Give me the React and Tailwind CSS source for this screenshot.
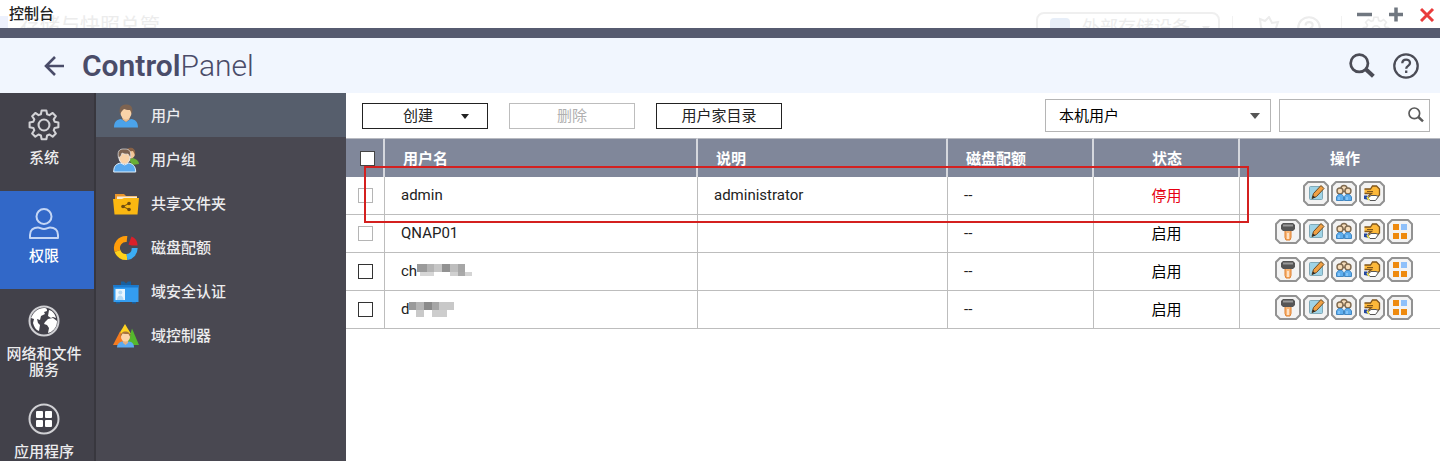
import { clsx } from 'clsx'

const navItems = [
  { label: '系统', icon: SystemIcon },
  { label: '权限', icon: PrivilegeIcon, active: true },
  { label: '网络和文件服务', icon: GlobeIcon },
  { label: '应用程序', icon: AppsIcon },
]

const subItems = [
  { label: '用户', icon: UserIcon, active: true },
  { label: '用户组', icon: GroupIcon },
  { label: '共享文件夹', icon: FolderIcon },
  { label: '磁盘配额', icon: QuotaIcon },
  { label: '域安全认证', icon: BadgeIcon },
  { label: '域控制器', icon: DomainIcon },
]

const allActions = ['password', 'edit', 'groups', 'share', 'apps']

// mask: [x, y, width, height, colour] blocks that hide the rest of the name
const users = [
  { name: 'admin', description: 'administrator', enabled: false, locked: true, actions: ['edit', 'groups', 'share'] },
  { name: 'QNAP01', enabled: true, locked: true, actions: allActions },
  {
    name: 'ch',
    enabled: true,
    actions: allActions,
    mask: [
      [0, 0, 10, 8, '#9a9a9a'], [10, 0, 7, 8, '#b4b4b4'], [17, 0, 8, 8, '#c6c6c6'], [25, 0, 8, 8, '#929292'],
      [33, 0, 8, 8, '#bdbdbd'], [41, 0, 7, 8, '#a6a6a6'], [3, 8, 14, 4, '#d6d6d6'], [33, 8, 8, 4, '#d0d0d0'],
      [41, 8, 7, 4, '#a9a9a9'], [48, 8, 7, 4, '#d4d4d4'],
    ],
  },
  {
    name: 'd',
    enabled: true,
    actions: allActions,
    mask: [
      [0, 0, 7, 8, '#9a9a9a'], [7, 0, 8, 8, '#b4b4b4'], [15, 0, 8, 8, '#8a8a8a'], [23, 0, 7, 8, '#a6a6a6'],
      [30, 0, 15, 8, '#c8c8c8'], [7, 8, 8, 7, '#c9c9c9'], [23, 8, 15, 7, '#cdcdcd'],
    ],
  },
]

const actionLabels = {
  password: '更改密码',
  edit: '编辑帐号配置',
  groups: '编辑用户组',
  share: '编辑共享文件夹权限',
  apps: '编辑应用程序权限',
}

// Rounded gear with eight teeth
const GEAR =
  'M13.500 1.500h5l.8 4 2.500 1 3.400-2.300 3.400 3.400-2.300 3.400 1 2.500 4 .8v5l-4 .8-1 2.500 2.300 3.400-3.400 3.400-3.400-2.300-2.500 1-.8 4h-5l-.8-4-2.500-1-3.400 2.300-3.400-3.400 2.300-3.400-1-2.500-4-.8v-5l4-.8 1-2.500-2.300-3.400 3.400-3.400 3.400 2.300 2.500-1z'

function SystemIcon() {
  return (
    <svg viewBox="0 0 32 34" className="size-8" fill="none" stroke="#d2d2d6" strokeWidth="2.200" strokeLinejoin="round">
      <path d={GEAR} />
      <circle cx="16" cy="17" r="5.800" />
    </svg>
  )
}

function PrivilegeIcon() {
  return (
    <svg viewBox="0 0 32 32" className="size-8" fill="none" stroke="#c4d6f5" strokeWidth="2" strokeLinejoin="round">
      <circle cx="16" cy="9.500" r="7.500" />
      <path d="M2 31v-3c0-5 3.500-7.500 8-7.500 2 0 3 1.500 6 1.500s4-1.500 6-1.500c4.500 0 8 2.500 8 7.500v3z" />
    </svg>
  )
}

function GlobeIcon() {
  return (
    <svg viewBox="0 0 32 32" className="size-8" fill="#fff">
      <circle cx="16" cy="16" r="14.500" fill="none" stroke="#d0d0d4" strokeWidth="2" />
      <path d="M4 11c2-4 6-8 12-8 3 0 3 1 3 3l-3 1 1 2-4 2-1 4-3-1 1 4 2 2-1 6c-3-1-5-4-6-8l1-4-3-1z" />
      <path d="M21 5c4 1 6 4 7 8l-3-1-2 1-3-2zM17 17l3-3 5-1 4 3c0 5-2 8-6 11l-3 1 1-5-2-3-3-1z" />
    </svg>
  )
}

function AppsIcon() {
  return (
    <svg viewBox="0 0 32 32" className="size-8" fill="#fff">
      <circle cx="16" cy="16" r="14.500" fill="none" stroke="#d0d0d4" strokeWidth="2" />
      <rect x="8" y="8" width="7" height="7" rx="1" />
      <rect x="17" y="8" width="7" height="7" rx="1" />
      <rect x="8" y="17" width="7" height="7" rx="1" />
      <rect x="17" y="17" width="7" height="7" rx="1" />
    </svg>
  )
}

function UserIcon() {
  return (
    <svg viewBox="0 0 26 26" className="size-[26px]">
      <path d="M1 24.500c0-6 3-8 7-8.500l5 3 5-3c4 .5 7 2.500 7 8.500z" fill="#4ba3ea" />
      <path d="M9.500 13h7v3.500L13 19l-3.500-2.500z" fill="#e9b98a" />
      <ellipse cx="13" cy="10" rx="5.500" ry="6.500" fill="#fad3a8" />
      <path d="M7 11C5 2 11 1.500 13 1.500c3 0 8 1 6 9.500L17 7c-3 0-5-.500-6-1L9 8z" fill="#7d6350" />
    </svg>
  )
}

function GroupIcon() {
  return (
    <svg viewBox="0 0 26 26" className="size-[26px]">
      <path d="M16 12l4-1c3 1 6 3 6 6l-7 1z" fill="#69ad35" />
      <ellipse cx="18" cy="6.500" rx="4" ry="5" fill="#f3c697" />
      <path d="M13 5c0-6 11-6 9 3l-2-4z" fill="#876044" />
      <path d="M.7 25c0-7 3-8 7-9l4 2 4-2c4 1 7 3 7 9z" fill="#59a9ee" stroke="#e0effc" />
      <ellipse cx="11.500" cy="10.500" rx="5.500" ry="6.500" fill="#fad3a8" stroke="#eeeeee" />
      <path d="M5.500 11c-2-9.500 3.500-9 6-9S19 2 17.500 11l-2.500-4c-3 .5-5-.5-6-1L8 9z" fill="#7d6350" stroke="#e6e6e6" strokeWidth=".7" />
    </svg>
  )
}

function FolderIcon() {
  return (
    <svg viewBox="0 0 26 26" className="size-[26px]">
      <path d="M2 3h9l2 2h11v8H2z" fill="#e9952a" />
      <path d="M4 5.500h20v6H4z" fill="#f7ead5" />
      <path d="M0 8h9l2-1h15l-1.500 16.500h-23z" fill="#fbb811" />
      <g fill="#704c10">
        <circle cx="10" cy="15.500" r="1.800" />
        <circle cx="16" cy="12.500" r="1.800" />
        <circle cx="16" cy="18.500" r="1.800" />
      </g>
      <path d="M16 12.500l-6 3 6 3" fill="none" stroke="#704c10" />
    </svg>
  )
}

function QuotaIcon() {
  return (
    <svg viewBox="0 0 26 26" className="size-[26px]" fill="none" strokeWidth="6">
      <path d="M4.500 16A9 9 0 0 1 14 4" stroke="#ff9d0a" />
      <path d="M14 22a9 9 0 0 1-9.500-6" stroke="#ffd21a" />
      <path d="M21.700 13A9 9 0 0 1 14 22" stroke="#3badf4" />
      <path d="M15.500 9.500l3-8c4 1.500 6 5 6 9h-6z" fill="#d9202a" stroke="none" />
    </svg>
  )
}

function BadgeIcon() {
  return (
    <svg viewBox="0 0 26 26" className="size-[26px]">
      <path d="M8 6V2.500h3l2 2 2-2h3V6z" fill="#175f9f" />
      <rect x=".5" y="6" width="25" height="17" fill="#349df0" />
      <rect x=".5" y="6" width="25" height="2.500" fill="#1b79cc" />
      <rect x="2.500" y="10" width="9.500" height="11" fill="#e9f6ff" />
      <circle cx="7.300" cy="13.500" r="2" fill="#b4daf5" />
      <path d="M4 21c0-6 6.500-6 6.500 0z" fill="#b4daf5" />
      <path d="M3 23h4v1.500H3zM19 23h4v1.500h-4z" fill="#175f9f" />
    </svg>
  )
}

function DomainIcon() {
  return (
    <svg viewBox="0 0 26 26" className="size-[26px]">
      <path d="M12 1l6 10H6z" fill="#ffd321" />
      <path d="M7 8.500L14 22H0z" fill="#f47b20" />
      <path d="M19 5.500L26 22H14z" fill="#55b82d" />
      <path d="M4 24.500c0-4 3-5.500 5-6h7c3 .5 5 2 5 6z" fill="#5baaf0" />
      <path d="M10 17h5v3l-2.500 2-2.500-2z" fill="#e5b180" />
      <circle cx="12.500" cy="14" r="4.500" fill="#fbd4aa" />
      <path d="M7.500 14c-1-7.500 11-7.500 10 0l-2-3c-2 0-5 0-6-.500z" fill="#a8743f" />
    </svg>
  )
}

const actionGlyphs = {
  password: (
    <>
      <path d="M10 10h6v8.500l-1 2.500h-4l-1-2.500z" fill="#f9b574" stroke="#dd7d2a" />
      <path d="M13 14v6" stroke="#fff0df" strokeWidth="1.500" />
      <path d="M8 4h10l2 2v4l-2 2H8l-2-2V6z" fill="#555" />
      <path d="M8 6.500h10" stroke="#999" strokeWidth="2" />
    </>
  ),
  edit: (
    <>
      <rect x="6.500" y="5.500" width="13" height="13" rx="1" fill="#9fd3e6" stroke="#7fa9b8" />
      <path d="M9 17.500l1.500-5L18 4.500l3 3-7.500 8z" fill="#f0a044" stroke="#6b4a22" />
      <path d="M9 17.500l1-3 2.500 2z" fill="#2b2b2b" />
    </>
  ),
  groups: (
    <>
      <circle cx="13" cy="7.500" r="3" fill="#f6dcb9" stroke="#7f6a50" strokeWidth="1.400" />
      <circle cx="9" cy="10" r="3" fill="#f6dcb9" stroke="#7f6a50" strokeWidth="1.400" />
      <circle cx="17" cy="10" r="3" fill="#f6dcb9" stroke="#7f6a50" strokeWidth="1.400" />
      <path d="M5.500 19.500V16l2-2.500h3.500l1.500 2v4zM13.500 19.500v-4l1.500-2h3.500l2 2.500v3.500z" fill="#5eaeee" stroke="#4287c2" />
      <path d="M8 16v3M16 16v3" stroke="#a8d8ff" />
    </>
  ),
  share: (
    <>
      <path d="M5.500 8h6l2-3h4l3 3v6l-3 3-8-2 3-2.500h-7" fill="#fdb93a" stroke="#80561c" strokeWidth="1.300" />
      <path d="M8 10.500h6" stroke="#80561c" />
      <path d="M9 17l3-2.500h5l2.500 1-3 4H11z" fill="#fff" stroke="#555" />
      <path d="M5 14.500h3l2 4.500-5-1z" fill="#2346a0" />
      <path d="M8 16l2 3" stroke="#f3e34b" strokeWidth="1.500" />
    </>
  ),
  apps: (
    <>
      <rect x="6" y="5" width="6" height="6" fill="#ee8a0e" />
      <rect x="14" y="5" width="6" height="6" fill="#8ec0fa" />
      <rect x="6" y="14" width="6" height="6" fill="#ee8a0e" />
      <rect x="14" y="14" width="6" height="6" fill="#ee8a0e" />
    </>
  ),
}

function ActionButton({ type }) {
  return (
    <button type="button" aria-label={actionLabels[type]} title={actionLabels[type]} className="block">
      <svg viewBox="0 0 26 25" className="h-[25px] w-[26px]" fill="none">
        <path d="M5 1h16l4 4v15l-4 4H5l-4-4V5z" fill="#f3f3f3" stroke="#929292" strokeWidth="2" strokeLinejoin="round" />
        {actionGlyphs[type]}
      </svg>
    </button>
  )
}

function SearchIcon({ className }) {
  return (
    <svg viewBox="0 0 24 24" className={className} fill="none" stroke="currentColor">
      <circle cx="9.500" cy="9.500" r="8" strokeWidth="2.500" />
      <path d="M15.500 15l7 6.500" strokeWidth="3.800" />
    </svg>
  )
}

function HelpIcon({ className }) {
  return (
    <svg viewBox="0 0 26 26" className={className} fill="none" stroke="currentColor" strokeWidth="2.300">
      <circle cx="13" cy="13" r="11.700" />
      <path d="M9.300 10.300c0-5 7.700-4.700 7.700-.3 0 3-3.800 2.700-3.800 5.700M13.200 17.500V20" />
    </svg>
  )
}

function Caret({ className }) {
  return (
    <svg viewBox="0 0 10 6" className={className} fill="currentColor">
      <path d="M0 0h10L5 6z" />
    </svg>
  )
}

// The window underneath shows faintly through the title bar
function Backdrop() {
  return (
    <div aria-hidden="true" className="absolute inset-0 flex items-start pt-3 text-[#ececec]">
      <span className="mt-1 h-3 w-2 bg-[#edf1fd]" />
      <span className="ml-3 text-xl leading-7">存储与快照总管</span>
      <div className="mr-[50px] ml-auto flex items-start">
        <div className="flex h-8 w-[184px] items-center rounded-lg border-2 border-[#efefef] pl-3 text-lg leading-7">
          <span className="mr-3 h-5 w-5 rounded-sm bg-[#e7eef8]" />
          外部存储设备
          <Caret className="ml-3 h-[5px] w-2" />
        </div>
        <span className="mx-3 mt-1 h-5 w-px bg-[#f2f2f2]" />
        <svg viewBox="0 0 24 24" className="mt-1 ml-3 size-6" fill="none" stroke="currentColor" strokeWidth="2">
          <path d="M3 3l5 2 4-4 3 6 6-1-2 6 4 4-8 3-7-1-4-7z" />
        </svg>
        <HelpIcon className="mt-1 ml-4 size-6" />
        <span className="mx-5 mt-1 h-5 w-px bg-[#f2f2f2]" />
        <svg viewBox="0 0 32 34" className="mt-1 size-7" fill="none" stroke="currentColor" strokeWidth="2">
          <path d={GEAR} />
          <circle cx="16" cy="17" r="5" />
        </svg>
      </div>
    </div>
  )
}

function TitleBar() {
  return (
    <div className="relative h-7 shrink-0 overflow-hidden bg-white">
      <Backdrop />
      <div className="relative flex h-full items-center justify-between pr-1 pl-[9px]">
        <h1 className="text-[15px] font-medium text-[#222]">控制台</h1>
        <div className="flex gap-4">
          <button type="button" aria-label="最小化" className="text-[#707780]">
            <svg viewBox="0 0 16 16" className="size-4" stroke="currentColor" strokeWidth="3.500">
              <path d="M1 8.500h15" />
            </svg>
          </button>
          <button type="button" aria-label="最大化" className="text-[#707780]">
            <svg viewBox="0 0 16 16" className="size-4" stroke="currentColor" strokeWidth="3.500">
              <path d="M1 8.500h14M8 1.500v14" />
            </svg>
          </button>
          <button type="button" aria-label="关闭" className="text-[#e93b3b]">
            <svg viewBox="0 0 16 16" className="size-4" stroke="currentColor" strokeWidth="3">
              <path d="M1 3l12 12M13 3L1 15" />
            </svg>
          </button>
        </div>
      </div>
    </div>
  )
}

function PanelHeader() {
  return (
    <header className="flex h-[65px] shrink-0 items-center justify-between border-t-10 border-[#565b70] bg-[#f1f6fe] pr-[21px] pl-11">
      <div className="flex items-center gap-4 text-[#4a4c69]">
        <button type="button" aria-label="返回">
          <svg viewBox="0 0 22 20" className="h-5 w-[22px]" fill="none" stroke="currentColor" strokeWidth="2.600">
            <path d="M20 10H2M11 1l-9 9 9 9" />
          </svg>
        </button>
        <h2 className="text-[30px] leading-8 font-light">
          <span className="font-semibold">Control</span>Panel
        </h2>
      </div>
      <div className="flex items-center gap-[18px] text-[#4b4c56]">
        <button type="button" aria-label="搜索">
          <SearchIcon className="size-[26px]" />
        </button>
        <button type="button" aria-label="帮助">
          <HelpIcon className="size-[26px]" />
        </button>
      </div>
    </header>
  )
}

function MainNav() {
  return (
    <nav className="w-24 shrink-0 overflow-hidden border-r-2 border-[#38373e] bg-[#42414a]">
      {navItems.map(({ label, icon: Icon, active }) => (
        <a
          key={label}
          href="#"
          className={clsx(
            'flex h-[98px] flex-col items-center gap-[9px] pt-4 pr-[6px] text-center text-[15px] leading-4 font-medium text-[#ececee]',
            active && 'bg-[#3268c8] text-white'
          )}
        >
          <Icon />
          <span className="w-[76px]">{label}</span>
        </a>
      ))}
    </nav>
  )
}

function SubNav() {
  return (
    <nav className="w-[250px] shrink-0 overflow-hidden bg-[#494851]">
      {subItems.map(({ label, icon: Icon, active }) => (
        <a
          key={label}
          href="#"
          className={clsx('flex h-11 items-center gap-3 pt-[2px] pl-[17px] text-[15px] font-medium text-[#ececee]', active && 'bg-[#565e6c]')}
        >
          <Icon />
          {label}
        </a>
      ))}
    </nav>
  )
}

function Toolbar() {
  return (
    <div className="flex h-[45px] items-center justify-between pr-[10px] pl-4">
      <div className="flex gap-[21px] text-[15px]">
        <button type="button" className="flex h-[26px] w-[126px] items-center justify-end gap-7 border border-[#222] pt-[2px] pr-[18px] text-[#222]">
          创建
          <Caret className="h-[5px] w-2" />
        </button>
        <button type="button" disabled className="h-[26px] w-[126px] border border-[#bdbdbd] pt-[2px] leading-none text-[#b0b0b0]">
          删除
        </button>
        <button type="button" className="h-[26px] w-[126px] border border-[#222] pt-[2px] leading-none text-[#222]">
          用户家目录
        </button>
      </div>
      <div className="flex gap-2">
        <div className="relative">
          <select aria-label="用户类型" className="h-[33px] w-[226px] appearance-none border border-[#b5b5b5] bg-white px-[13px] pt-[2px] text-[15px] text-black">
            <option>本机用户</option>
          </select>
          <Caret className="pointer-events-none absolute top-[14px] right-[11px] h-[6px] w-[10px] text-[#555]" />
        </div>
        <div className="relative">
          <input type="text" aria-label="搜索用户" className="h-[33px] w-[151px] border border-[#b5b5b5] pr-7 pl-2 text-[15px]" />
          <button type="button" aria-label="搜索" className="absolute top-2 right-[6px] text-[#5a5a5a]">
            <SearchIcon className="size-4" />
          </button>
        </div>
      </div>
    </div>
  )
}

function UserName({ user }) {
  return (
    <span className="flex items-center">
      {user.name}
      {user.mask && (
        <svg viewBox="0 0 56 15" className="h-[15px] w-14">
          {user.mask.map(([x, y, width, height, fill]) => (
            <rect key={`${x}-${y}`} x={x} y={y} width={width} height={height} fill={fill} />
          ))}
        </svg>
      )}
    </span>
  )
}

function UserTable() {
  const head = 'border-r-2 border-r-[#d5d7dd] pt-[2px] pl-[18px]'
  const cell = 'border-r border-r-[#bdbdbd] px-4'
  return (
    <div className="relative">
      <table className="w-full table-fixed border-separate border-spacing-0 text-left text-[15px] text-[#222]">
        <colgroup>
          <col className="w-[39px]" />
          <col />
          <col className="w-[250px]" />
          <col className="w-[146px]" />
          <col className="w-[146px]" />
          <col className="w-[200px]" />
        </colgroup>
        <thead>
          <tr className="h-[39px] bg-[#80879a] text-white *:border-t *:border-t-[#b8bac1] *:font-bold">
            <th className="border-r-2 border-r-[#d5d7dd] pl-[14px]">
              <input type="checkbox" aria-label="全选" className="block size-[15px] appearance-none border border-[#444] bg-white" />
            </th>
            <th className={head}>用户名</th>
            <th className={head}>说明</th>
            <th className={head}>磁盘配额</th>
            <th className={clsx(head, 'pr-4 text-center')}>状态</th>
            <th className="pt-[2px] pl-[10px] text-center">操作</th>
          </tr>
        </thead>
        <tbody>
          {users.map((user) => (
            <tr key={user.name} className="h-[38px] *:border-b *:border-b-[#bdbdbd]">
              <td className="border-r border-r-[#bdbdbd] pl-3">
                <input
                  type="checkbox"
                  aria-label={user.name}
                  disabled={user.locked}
                  className="block size-[15px] appearance-none border border-[#333] bg-white disabled:border-[#b5b5b5]"
                />
              </td>
              <td className={cell}>
                <UserName user={user} />
              </td>
              <td className={cell}>{user.description}</td>
              <td className={cell}>--</td>
              <td className={clsx(cell, 'pt-[2px] text-center', user.enabled ? 'text-black' : 'text-[#e60012]')}>
                {user.enabled ? '启用' : '停用'}
              </td>
              <td className="pt-1 pl-2 align-top">
                <div className="flex justify-center gap-[2px]">
                  {user.actions.map((action) => (
                    <ActionButton key={action} type={action} />
                  ))}
                </div>
              </td>
            </tr>
          ))}
        </tbody>
      </table>
      <div className="pointer-events-none absolute top-[28px] right-[191px] left-[18px] h-[57px] border-2 border-[#d4201f]" />
    </div>
  )
}

export default function App() {
  return (
    <div className="flex h-screen flex-col overflow-hidden bg-white font-[Roboto,'Noto_Sans_CJK_SC',sans-serif]">
      <TitleBar />
      <PanelHeader />
      <div className="flex min-h-0 flex-1">
        <MainNav />
        <SubNav />
        <main className="min-w-0 flex-1">
          <Toolbar />
          <UserTable />
        </main>
      </div>
    </div>
  )
}
